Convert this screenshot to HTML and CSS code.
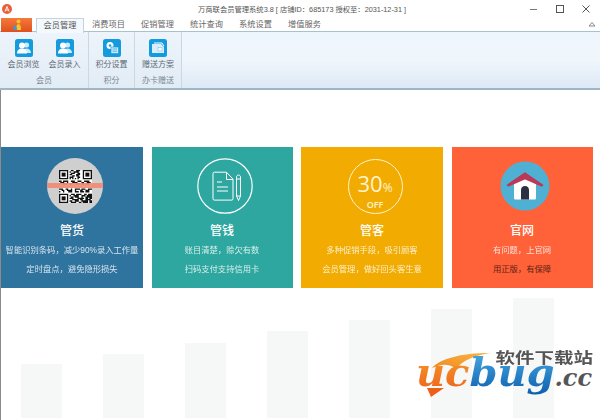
FILE: index.html
```html
<!DOCTYPE html>
<html lang="zh-CN">

<head>
    <meta charset="UTF-8">
    <title>万商联会员管理系统3.8</title>
    <link rel="stylesheet" href="styles.css">
</head>

<body>
    <svg class="defs" width="0" height="0">
        <symbol id="users" viewBox="0 0 18 18">
            <rect width="18" height="18" rx="2.5" fill="#149bde" />
            <circle cx="11.5" cy="6" r="2.6" fill="#cfeaf8" />
            <path d="M7.5 14c0-3 1.5-4.500 4-4.500s4.500 1.500 4.500 4.500z" fill="#cfeaf8" />
            <circle cx="7" cy="6.500" r="3" fill="#fff" />
            <path d="M2 14.500c0-3.500 2-5 5-5s5 1.500 5 5z" fill="#fff" />
        </symbol>
    </svg>

    <header class="titlebar">
        <svg class="app-icon" viewBox="0 0 10 10" width="10" height="10">
            <circle cx="5" cy="5" r="5" fill="#e8603a" />
            <path d="M3 7.500 5 2.500l2 5M3.800 6h2.400" fill="none" stroke="#fff" stroke-width=".9" />
        </svg>
        <div class="title">万商联会员管理系统3.8 [ 店铺ID：685173 授权至：2031-12-31 ]</div>
        <div class="win-buttons">
            <svg viewBox="0 0 10 10" width="10" height="10"><path d="M1 5.500h7" stroke="#777" fill="none" /></svg>
            <svg viewBox="0 0 10 10" width="10" height="10"><rect x="1.500" y="1.500" width="7" height="7" stroke="#555" fill="none" /></svg>
            <svg viewBox="0 0 10 10" width="10" height="10"><path d="M1.500 1.500l7 7m0-7l-7 7" stroke="#555" fill="none" /></svg>
        </div>
    </header>

    <nav class="tabs">
        <div class="file-tab">
            <svg viewBox="0 0 12 12" width="12" height="12">
                <circle cx="7.500" cy="2.500" r="2" fill="#f6c431" />
                <path d="M5 11c0-4 .8-6 2.500-6s2.500 2 2.500 6z" fill="#f6c431" />
                <path d="M2 11c0-3 .8-4.500 2-4.500S6 8 6 11z" fill="#4b8fd6" />
            </svg>
        </div>
        <div class="tab active">会员管理</div>
        <div class="tab">消费项目</div>
        <div class="tab">促销管理</div>
        <div class="tab">统计查询</div>
        <div class="tab">系统设置</div>
        <div class="tab">增值服务</div>
        <svg class="collapse" viewBox="0 0 8 6" width="8" height="6"><path d="M1 5h6L4 1.500z" fill="none" stroke="#888" /></svg>
    </nav>

    <section class="ribbon">
        <div class="group group-member">
            <div class="buttons">
                <div class="rb">
                    <svg width="18" height="18"><use href="#users" /></svg>
                    <span>会员浏览</span>
                </div>
                <div class="rb">
                    <svg width="18" height="18"><use href="#users" /></svg>
                    <span>会员录入</span>
                </div>
            </div>
            <div class="group-name">会员</div>
        </div>
        <div class="group group-points">
            <div class="buttons">
                <div class="rb">
                    <svg viewBox="0 0 18 18" width="18" height="18">
                        <rect width="18" height="18" rx="2.500" fill="#149bde" />
                        <circle cx="7" cy="6.500" r="3.500" fill="#fff" />
                        <circle cx="7" cy="6.500" r="1.200" fill="#149bde" />
                        <rect x="8" y="8" width="7.500" height="6.500" fill="#cfeaf8" stroke="#149bde" stroke-width=".7" />
                        <path d="M9.500 10h4.500M9.500 12.200h4.500" stroke="#149bde" stroke-width=".7" />
                    </svg>
                    <span>积分设置</span>
                </div>
            </div>
            <div class="group-name">积分</div>
        </div>
        <div class="group group-card">
            <div class="buttons">
                <div class="rb">
                    <svg viewBox="0 0 18 18" width="18" height="18">
                        <rect width="18" height="18" rx="2.500" fill="#149bde" />
                        <path d="M3 5h9l3 3v6H3z" fill="#d8eefa" />
                        <path d="M5 4h8l2 3" fill="none" stroke="#fff" />
                        <rect x="9" y="8.500" width="4" height="3.500" fill="#fff" stroke="#7cc4ea" stroke-width=".6" />
                    </svg>
                    <span>赠送方案</span>
                </div>
            </div>
            <div class="group-name">办卡赠送</div>
        </div>
    </section>

    <main class="main">
        <div class="bars">
            <div class="bar" style="height:54px"></div>
            <div class="bar" style="height:64px"></div>
            <div class="bar" style="height:75px"></div>
            <div class="bar" style="height:87px"></div>
            <div class="bar" style="height:98px"></div>
            <div class="bar" style="height:109px"></div>
            <div class="bar" style="height:120px"></div>
        </div>

        <div class="cards">
            <div class="card card-blue">
                <div class="card-icon">
                    <div class="scan">
                        <svg class="qr" viewBox="0 0 25 25" width="33" height="33">
                            <rect width="25" height="25" fill="#fff" />
                            <g fill="none" stroke="#111" stroke-width="1">
                                <path d="M.5.500h6v6h-6zM18.500.500h6v6h-6zM.5 18.500h6v6h-6z" />
                                <path d="M9 .5h2m2 0h3M8 1.500h1m2 0h4M9 2.500h3m2 0h2M8 3.500h2m3 0h3M10 4.500h2m1 0h2M8 5.500h3m3 0h2M8 6.500h1m1 0h1m1 0h1m1 0h1" />
                                <path d="M0 8.500h2m1 0h4m2 0h3m2 0h3m2 0h4M1 9.500h3m2 0h1m3 0h4m3 0h2m2 0h3M0 10.500h1m2 0h3m2 0h2m3 0h3m1 0h2m1 0h3" />
                                <path d="M0 14.500h3m2 0h2m2 0h1m2 0h4m1 0h3m2 0h3M2 15.500h2m2 0h4m2 0h1m3 0h2m2 0h3M0 16.500h1m2 0h1m3 0h3m2 0h3m1 0h3m1 0h3" />
                                <path d="M9 18.500h3m1 0h4m2 0h2m1 0h3M8 19.500h1m2 0h4m2 0h3m1 0h4M9 20.500h2m1 0h3m2 0h1m2 0h5M8 21.500h3m3 0h5m1 0h2m1 0h2M10 22.500h5m1 0h2m2 0h4M8 23.500h2m2 0h3m2 0h5m1 0h2M9 24.500h4m2 0h2m1 0h4m1 0h2" />
                            </g>
                            <rect x="2" y="2" width="3" height="3" fill="#111" />
                            <rect x="20" y="2" width="3" height="3" fill="#111" />
                            <rect x="2" y="20" width="3" height="3" fill="#111" />
                        </svg>
                        <div class="scan-line"></div>
                    </div>
                </div>
                <h2>管货</h2>
                <p>智能识别条码，减少90%录入工作量</p>
                <p>定时盘点，避免隐形损失</p>
            </div>

            <div class="card card-teal">
                <div class="card-icon">
                    <svg viewBox="0 0 56 56" width="56" height="56" fill="none" stroke="#fff">
                        <circle cx="28" cy="28" r="27.200" stroke-width="1.200" />
                        <path d="M16 15.500c0-.8.500-1.300 1.300-1.300h12.200l6.500 7v19.600c0 .8-.5 1.300-1.300 1.300H17.300c-.8 0-1.300-.5-1.300-1.300z" stroke-width="1" />
                        <path d="M29.500 14.500v7h6.500" stroke-width="1" />
                        <path d="M20 24h5M20 29h11M20 33h11" stroke-width="1" />
                        <path d="M39.500 19c0-1 .8-2 2-2s2 1 2 2v19l-2 4.500-2-4.500zM39.500 21h4M39.500 38h4" stroke-width="1" />
                    </svg>
                </div>
                <h2>管钱</h2>
                <p>账目清楚，赊欠有数</p>
                <p>扫码支付支持信用卡</p>
            </div>

            <div class="card card-amber">
                <div class="card-icon">
                    <div class="off-badge">
                        <div class="off-top"><span class="off-num">30</span><span class="off-pct">%</span></div>
                        <div class="off-word">OFF</div>
                    </div>
                </div>
                <h2>管客</h2>
                <p>多种促销手段，吸引顾客</p>
                <p>会员管理，做好回头客生意</p>
            </div>

            <div class="card card-red">
                <div class="card-icon">
                    <svg viewBox="0 0 50 50" width="50" height="50">
                        <circle cx="25" cy="25" r="24.500" fill="#4fb0d3" />
                        <path d="M14 20 25 13l11 7v17c0 1-.7 1.500-1.500 1.500h-19c-.8 0-1.500-.5-1.500-1.500z" fill="#fff" />
                        <path d="M7.500 24 25 12l17.500 12-1 .8L25 17.500 8.500 24.800z" fill="#b93a58" stroke="#b93a58" stroke-width="1.500" stroke-linejoin="round" />
                        <path d="M21 38.500V29c0-2.500 1.800-4 4-4s4 1.500 4 4v9.500z" fill="#2a3140" />
                    </svg>
                </div>
                <h2>官网</h2>
                <p>有问题，上官网</p>
                <p class="dark">用正版，有保障</p>
            </div>
        </div>

        <div class="watermark">
            <svg class="swoosh" viewBox="0 0 66 50" width="66" height="50">
                <defs>
                    <linearGradient id="sw" x1="0" x2="1" y1="1" y2="0">
                        <stop offset="0" stop-color="#f08a1c" />
                        <stop offset="1" stop-color="#f9b544" />
                    </linearGradient>
                </defs>
                <path d="M6 16C14 7 34 1 64 1 46 4 36 9 30 17 23 11 15 12 6 16z" fill="url(#sw)" />
                <path d="M1 36l4 9 13-9z" fill="#ee5f1a" />
            </svg>
            <div class="wm-cn">软件下载站</div>
            <div class="wm-en"><span class="wm-uc">uc</span><span class="wm-bug">bug</span><span class="wm-cc">.cc</span></div>
        </div>
    </main>
</body>

</html>
```

FILE: styles.css
```css
* {
    box-sizing: border-box;
}

html,
body {
    margin: 0;
    height: 100%;
}

body {
    width: 600px;
    height: 420px;
    overflow: hidden;
    background-color: white;
    font-family: "Liberation Sans", "Noto Sans CJK SC", sans-serif;
    display: flex;
    flex-direction: column;
}

.defs {
    position: absolute;
}

.titlebar {
    height: 18px;
    display: flex;
    align-items: center;
    padding: 0 9px 0 2px;
    flex-shrink: 0;
}

.app-icon {
    flex-shrink: 0;
}

.title {
    margin-left: 186px;
    font-size: 7.300px;
    color: #555;
    white-space: nowrap;
}

.win-buttons {
    margin-left: auto;
    display: flex;
    gap: 16px;
}

.tabs {
    height: 14px;
    display: flex;
    align-items: stretch;
    position: relative;
    flex-shrink: 0;
    padding-left: 1px;
    border-bottom: 1px solid #a9c0cf;
}

.file-tab {
    width: 31px;
    height: 14px;
    margin-right: 4px;
    background: linear-gradient(#f47a3c, #e0501a);
    display: flex;
    align-items: center;
    justify-content: center;
}

.tab {
    width: 49px;
    font-size: 8.200px;
    line-height: 14px;
    color: #666;
    text-align: center;
}

.tab.active {
    width: 48px;
    height: 15px;
    background-color: #f4f9fd;
    border: 1px solid #c5d3de;
    border-bottom: none;
    line-height: 14px;
    color: #555;
}

.collapse {
    position: absolute;
    right: 4px;
    top: 3px;
}

.ribbon {
    height: 58px;
    flex-shrink: 0;
    display: flex;
    background: linear-gradient(#eef6fd, #f0f6fc 50%, #dde9f5);
    border-bottom: 2px solid #9fb5c8;
}

.group {
    display: flex;
    flex-direction: column;
    align-items: center;
    border-right: 1px solid #cbd7e2;
    background: linear-gradient(#edf4fb, #e2ecf5);
}

.group-member {
    width: 89px;
}

.group-points {
    width: 46px;
}

.group-card {
    width: 47px;
}

.buttons {
    display: flex;
    flex: 1;
}

.rb {
    width: 41px;
    padding-top: 7px;
    display: flex;
    flex-direction: column;
    align-items: center;
    gap: 1px;
    font-size: 8px;
    color: #5d6a76;
    white-space: nowrap;
}

.group-name {
    height: 13px;
    font-size: 8px;
    line-height: 12px;
    color: #7a8793;
}

.main {
    flex: 1;
    position: relative;
    padding-top: 57px;
    border-left: 1px solid #8b8b8b;
    background-color: white;
}

.bars {
    position: absolute;
    left: 20px;
    bottom: 2px;
    display: flex;
    align-items: flex-end;
    gap: 41px;
}

.bar {
    width: 41px;
    background-color: #f6f7f7;
}

.cards {
    position: relative;
    display: grid;
    grid-template-columns: 142px 141px 142px 141px;
    column-gap: 8.500px;
}

.card {
    height: 141px;
    padding-top: 11px;
    color: white;
    text-align: center;
}

.card-blue {
    background-color: #2f739f;
}

.card-teal {
    background-color: #2ea7a0;
}

.card-amber {
    background-color: #f2ab00;
}

.card-red {
    background-color: #ff6138;
}

.card-icon {
    height: 56px;
    padding-left: 6px;
    display: flex;
    align-items: center;
    justify-content: center;
}

.card h2 {
    margin: 8px 0 0;
    font-size: 12px;
    line-height: 18px;
    font-weight: 500;
}

.card p {
    margin: 0;
    font-size: 8.300px;
    line-height: 19px;
    white-space: nowrap;
    opacity: 0.8;
}

.card h2 + p {
    margin-top: 1px;
}

.card p.dark {
    color: #5a2316;
    opacity: 1;
}

.scan {
    width: 56px;
    height: 56px;
    border-radius: 50%;
    background-color: #cfcfcf;
    position: relative;
    overflow: hidden;
    display: flex;
    align-items: center;
    justify-content: center;
}

.scan-line {
    position: absolute;
    left: 0;
    right: 0;
    top: 25px;
    height: 5px;
    background-color: #f28a70;
    opacity: 0.9;
}

.off-badge {
    width: 55px;
    height: 55px;
    border: 1.500px solid #fff3d0;
    border-radius: 50%;
    display: flex;
    flex-direction: column;
    align-items: center;
    color: #fff3d0;
    padding-top: 12px;
}

.off-top {
    line-height: 22px;
    white-space: nowrap;
}

.off-num {
    font-family: "Open Sans", sans-serif;
    font-size: 22px;
}

.off-pct {
    font-family: "Open Sans", sans-serif;
    font-size: 12px;
}

.off-word {
    font-family: "Open Sans", sans-serif;
    font-size: 9px;
    font-weight: 600;
    line-height: 10px;
    margin-top: 1px;
}

.watermark {
    position: absolute;
    left: 415px;
    top: 260px;
    width: 180px;
    height: 54px;
}

.swoosh {
    position: absolute;
    left: 10px;
    top: 2px;
}

.wm-cn {
    position: absolute;
    right: 3px;
    top: 1px;
    font-size: 15px;
    line-height: 14px;
    font-weight: 700;
    color: #555;
    white-space: nowrap;
    transform: scaleX(1.3);
    transform-origin: right center;
}

.wm-en {
    position: absolute;
    left: 0;
    top: -2px;
    font-family: "DejaVu Serif", serif;
    font-size: 40px;
    line-height: 48px;
    font-weight: 700;
    font-style: italic;
    white-space: nowrap;
}

.wm-uc {
    background: linear-gradient(#f7a32c, #ee5f1a);
    -webkit-background-clip: text;
    background-clip: text;
    color: transparent;
}

.wm-bug {
    background: linear-gradient(#4fb0e6, #0b5fae);
    -webkit-background-clip: text;
    background-clip: text;
    color: transparent;
}

.wm-cc {
    font-size: 24px;
    color: #555;
}
```
